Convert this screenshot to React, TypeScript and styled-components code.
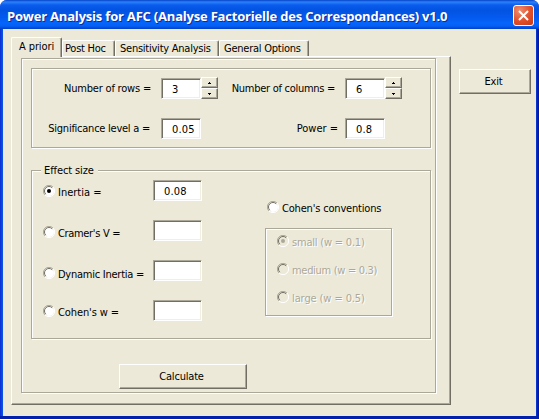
import React from 'react';
import styled, { createGlobalStyle, css } from 'styled-components';

const FACE = '#ece9d8';
const SHADOW = '#aca899';
const DARK = '#716f64';

const GlobalStyle = createGlobalStyle`
  * { box-sizing: border-box; }
  body {
    margin: 0;
    overflow: hidden;
    font: 11px/14px "DejaVu Sans Condensed", "DejaVu Sans", sans-serif;
    font-stretch: condensed;
    color: #000;
  }
`;

const Window = styled.div`
  width: 539px;
  height: 419px;
  display: flex;
  flex-direction: column;
  background: linear-gradient(90deg, #0a2fd0 0, #0a56ea 3px, #0a3cd8 536px, #0018a0 538px);
  border-bottom: 3px solid #0220ac;
  border-radius: 7px 7px 0 0;
  overflow: hidden;
`;

const TitleBar = styled.header`
  height: 29px;
  flex: none;
  display: flex;
  align-items: center;
  justify-content: space-between;
  padding: 3px 4px 0 7px;
  background: linear-gradient(#0742c8 0, #2b82fa 2px, #0a5cee 5px, #0353e2 10px, #0459ee 17px, #0565fb 23px, #0460f6 26px, #0240c4 29px);
`;

const Title = styled.h1`
  margin: 0;
  font: bold 13px/18px "Open Sans", "Noto Sans", sans-serif;
  letter-spacing: -0.2px;
  white-space: nowrap;
  color: #fff;
  text-shadow: 1px 1px 0 #0a2f9c;
`;

const CloseButton = styled.button`
  width: 21px;
  height: 21px;
  margin: -1px 1px 0 0;
  padding: 0;
  border: 1px solid #fff;
  border-radius: 3px;
  background: radial-gradient(circle at 30% 25%, #ee8e70, #df4f2a 55%, #c53b15);
  svg { display: block; margin: 3px; }
`;

const Client = styled.main`
  height: 387px;
  flex: none;
  margin: 0 3px;
  padding: 8px 5px 0 8px;
  display: flex;
  justify-content: space-between;
  background: ${FACE};
`;

const TabControl = styled.div`
  width: 440px;
`;

const TabStrip = styled.nav`
  height: 19px;
  display: flex;
  align-items: flex-end;
`;

const Tab = styled.div<{ $width: number; $indent?: number; $active?: boolean }>`
  position: relative;
  width: ${p => p.$width}px;
  height: 16px;
  padding: 1px 0 0 ${p => p.$indent ?? 4}px;
  background: ${FACE};
  border-top: 1px solid #fff;
  border-left: 1px solid #fff;
  border-right: 1px solid ${DARK};
  border-radius: 2px 2px 0 0;
  box-shadow: inset -1px 0 0 ${SHADOW};
  white-space: nowrap;
  letter-spacing: -0.24px;
  ${p => p.$active && css`
    height: 20px;
    margin-bottom: -1px;
    padding-top: 2px;
    letter-spacing: -0.1px;
    z-index: 1;
  `}
`;

const TabPage = styled.section`
  height: 349px;
  padding: 1px 14px 11px 10px;
  border-top: 1px solid #fff;
  border-left: 1px solid #fff;
  border-right: 1px solid ${DARK};
  border-bottom: 1px solid ${DARK};
  box-shadow: inset -1px -1px 0 ${SHADOW};
`;

const etched = css`
  border: 1px solid ${SHADOW};
  box-shadow: 1px 1px 0 #fff, inset 1px 1px 0 #fff;
`;

const PageFrame = styled.div`
  ${etched}
  width: 415px;
  height: 335px;
  margin-left: -1px;
  padding: 9px 0 0 9px;
`;

const Group = styled.div`
  ${etched}
  width: 400px;
  height: 80px;
  padding: 9px 0 0 0;
  display: flex;
  flex-direction: column;
  gap: 19px;
`;

const FieldRow = styled.div`
  height: 21px;
  display: flex;
`;

const Caption = styled.label<{ $width: number; $gap: number; $spacing?: number }>`
  width: ${p => p.$width}px;
  padding: 4px ${p => p.$gap}px 0 0;
  display: flex;
  justify-content: flex-end;
  white-space: nowrap;
  letter-spacing: ${p => p.$spacing ?? -0.25}px;
`;

const Field = styled.input<{ $width?: number }>`
  display: block;
  width: ${p => p.$width ?? 40}px;
  height: 21px;
  margin: 0;
  padding: 1px 0 0 10px;
  border: 1px solid;
  border-color: ${SHADOW} #fff #fff ${SHADOW};
  outline: 0;
  border-radius: 0;
  box-shadow: inset 1px 1px 0 ${DARK}, inset -1px -1px 0 #f1efe2;
  background: #fff;
  font: inherit;
  color: #000;
  letter-spacing: 0.2px;
`;

const Spinner = styled.div`
  width: 17px;
  height: 21px;
  margin-top: -1px;
  display: flex;
  flex-direction: column;
`;

const raised = css`
  border: 1px solid;
  border-color: #fff ${DARK} ${DARK} #fff;
  box-shadow: inset -1px -1px 0 ${SHADOW};
  background: ${FACE};
  border-radius: 0;
`;

const SpinButton = styled.button`
  ${raised}
  height: 11px;
  flex: none;
  padding: 0;
  svg { display: block; margin: 2px 0 0 5px; }
`;

const EffectGroup = styled.fieldset`
  ${etched}
  width: 400px;
  height: 169px;
  margin: 22px 0 0;
  padding: 0;
  min-width: 0;
`;

const Legend = styled.div`
  width: 57px;
  height: 14px;
  margin: -7px 0 0 9px;
  padding-left: 3px;
  background: ${FACE};
  white-space: nowrap;
  letter-spacing: -0.1px;
`;

const EffectBody = styled.div`
  display: flex;
  padding: 2px 0 0 11px;
`;

const Measures = styled.div`
  display: grid;
  grid-template-columns: 110px 49px;
  grid-template-rows: repeat(3, 40px) 21px;
`;

const Conventions = styled.div`
  padding: 21px 0 0 63px;
`;

const ConventionHeading = styled.div`
  padding-left: 2px;
`;

const ConventionBox = styled.div`
  ${etched}
  width: 127px;
  height: 88px;
  margin: 13px 0 0 0;
  padding: 6px 0 0 11px;
  display: flex;
  flex-direction: column;
  gap: 14px;
`;

const Option = styled.label<{ $top?: number; $spacing?: number; $disabled?: boolean }>`
  height: 14px;
  margin-top: ${p => p.$top ?? 0}px;
  display: flex;
  gap: 3px;
  white-space: nowrap;
  letter-spacing: ${p => p.$spacing ?? -0.25}px;
  ${p => p.$disabled && css`
    color: ${SHADOW};
    text-shadow: 1px 1px 0 #fff;
  `}
  svg { flex: none; }
  span { padding-top: 1px; }
`;

const PushButton = styled.button<{ $width: number; $height: number }>`
  ${raised}
  width: ${p => p.$width}px;
  height: ${p => p.$height}px;
  flex: none;
  padding: 1px 3px 0 0;
  font: inherit;
  letter-spacing: -0.2px;
  color: #000;
`;

const ActionRow = styled.div`
  display: flex;
  padding: 25px 0 0 88px;
`;

const SideActions = styled.aside`
  padding-top: 32px;
  display: flex;
  align-items: flex-start;
`;

function RadioDot({ checked, disabled }: { checked?: boolean; disabled?: boolean }) {
  return (
    <svg width="12" height="12" viewBox="0 0 12 12">
      <circle cx="6" cy="6" r="5" fill={disabled ? FACE : '#fff'} />
      <path d="M2 10A5.4 5.4 0 0 1 10 2" fill="none" stroke={SHADOW} />
      <path d="M2.8 9.2A4.5 4.5 0 0 1 9.2 2.8" fill="none" stroke={DARK} />
      <path d="M10 2A5.4 5.4 0 0 1 2 10" fill="none" stroke="#fff" />
      {checked && <circle cx="6" cy="6" r="2" fill={disabled ? SHADOW : '#000'} />}
    </svg>
  );
}

function Radio(props: { label: string; top?: number; spacing?: number; checked?: boolean; disabled?: boolean }) {
  return (
    <Option $top={props.top} $spacing={props.spacing} $disabled={props.disabled}>
      <RadioDot checked={props.checked} disabled={props.disabled} />
      <span>{props.label}</span>
    </Option>
  );
}

function SpinButtons() {
  return (
    <Spinner>
      <SpinButton aria-label="Increase">
        <svg width="5" height="5"><path d="M2 1h1v1h1v1H1V2h1z" /></svg>
      </SpinButton>
      <SpinButton aria-label="Decrease">
        <svg width="5" height="5"><path d="M1 1h3v1H3v1H2V2H1z" /></svg>
      </SpinButton>
    </Spinner>
  );
}

export default function App() {
  return (
    <>
      <GlobalStyle />
      <Window>
        <TitleBar>
          <Title>Power Analysis for AFC (Analyse Factorielle des Correspondances) v1.0</Title>
          <CloseButton aria-label="Close">
            <svg width="13" height="13" viewBox="0 0 13 13">
              <path d="M2 2L11 11M11 2L2 11" stroke="#fff" strokeWidth="2" />
            </svg>
          </CloseButton>
        </TitleBar>
        <Client>
          <TabControl>
            <TabStrip>
              <Tab $width={51} $indent={7} $active>A priori</Tab>
              <Tab $width={53} $indent={2}>Post Hoc</Tab>
              <Tab $width={104}>Sensitivity Analysis</Tab>
              <Tab $width={90}>General Options</Tab>
            </TabStrip>
            <TabPage>
              <PageFrame>
                <Group>
                  <FieldRow>
                    <Caption $width={129} $gap={10} $spacing={-0.2}>Number of rows =</Caption>
                    <Field defaultValue="3" />
                    <SpinButtons />
                    <Caption $width={127} $gap={10} $spacing={-0.28}>Number of columns =</Caption>
                    <Field defaultValue="6" />
                    <SpinButtons />
                  </FieldRow>
                  <FieldRow>
                    <Caption $width={129} $gap={11}>Significance level a =</Caption>
                    <Field defaultValue="0.05" />
                    <Caption $width={144} $gap={7} $spacing={0}>Power =</Caption>
                    <Field defaultValue="0.8" />
                  </FieldRow>
                </Group>
                <EffectGroup>
                  <Legend>Effect size</Legend>
                  <EffectBody>
                    <Measures>
                      <Radio label="Inertia =" top={5} spacing={0} checked />
                      <Field $width={49} defaultValue="0.08" />
                      <Radio label="Cramer's V =" top={6} spacing={-0.33} />
                      <Field $width={49} />
                      <Radio label="Dynamic Inertia =" top={7} />
                      <Field $width={49} />
                      <Radio label="Cohen's w =" top={5} spacing={-0.1} />
                      <Field $width={49} />
                    </Measures>
                    <Conventions>
                      <ConventionHeading>
                        <Radio label="Cohen's conventions" spacing={-0.18} />
                      </ConventionHeading>
                      <ConventionBox>
                        <Radio label="small (w = 0.1)" spacing={-0.2} checked disabled />
                        <Radio label="medium (w = 0.3)" spacing={-0.3} disabled />
                        <Radio label="large (w = 0.5)" spacing={-0.1} disabled />
                      </ConventionBox>
                    </Conventions>
                  </EffectBody>
                </EffectGroup>
                <ActionRow>
                  <PushButton $width={128} $height={25}>Calculate</PushButton>
                </ActionRow>
              </PageFrame>
            </TabPage>
          </TabControl>
          <SideActions>
            <PushButton $width={72} $height={25}>Exit</PushButton>
          </SideActions>
        </Client>
      </Window>
    </>
  );
}
